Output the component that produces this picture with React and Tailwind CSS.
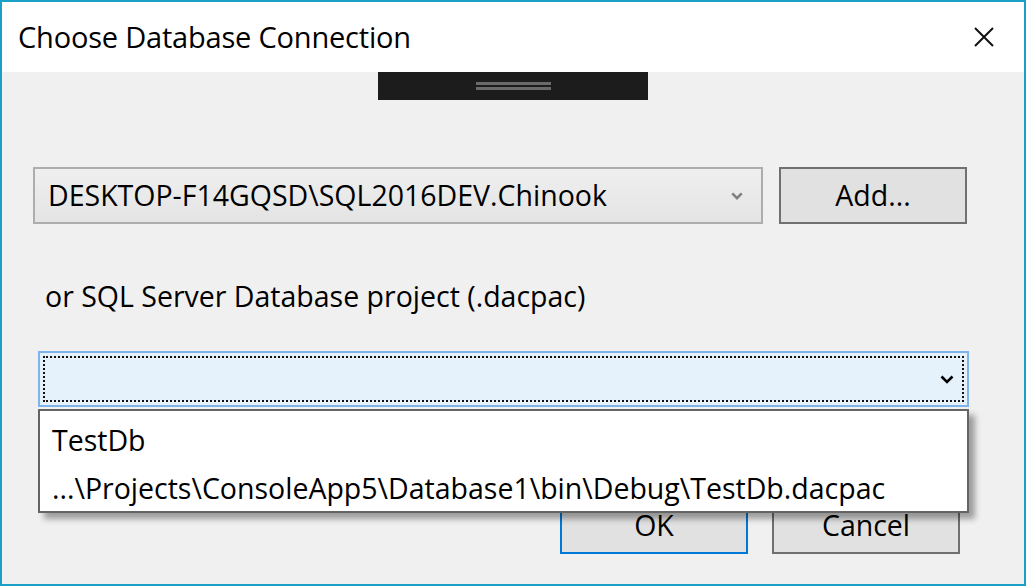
import React from "react";

const font = { fontFamily: '"Open Sans", "Noto Sans", sans-serif' };

const Chevron = ({ className, width = 2.6 }) => (
  <svg viewBox="0 0 14 9" className={className} fill="none" stroke="currentColor" strokeWidth={width}>
    <path d="M1.5 1.5 L7 7 L12.5 1.5" />
  </svg>
);

const Button = ({ label, focused }) => (
  <div
    className={
      "w-[188px] h-[57px] flex items-center justify-center bg-[#e1e1e1] border-2 text-[28.5px] text-black " +
      (focused ? "border-[#0078d7]" : "border-[#707070]")
    }
  >
    {label}
  </div>
);

export default function App() {
  return (
    <div
      className="w-[1026px] h-[586px] border-2 border-[#1aa0c5] bg-[#f0f0f0] flex flex-col overflow-hidden"
      style={font}
    >
      {/* title bar */}
      <div className="h-[70px] bg-white flex items-center justify-between pl-[16px] pr-[30px] shrink-0">
        <span className="text-[29px] text-black tracking-[-0.2px]">Choose Database Connection</span>
        <svg viewBox="0 0 20 20" className="w-[20px] h-[20px]" stroke="#111" strokeWidth="2">
          <path d="M1 1 L19 19 M19 1 L1 19" />
        </svg>
      </div>

      <div className="relative flex-1 flex flex-col">
        {/* drag handle */}
        <div className="mx-auto w-[270px] h-[28px] bg-[#1c1c1c] flex flex-col items-center justify-center gap-[2px]">
          <div className="w-[75px] h-[3px] bg-[#6a6a6a]" />
          <div className="w-[75px] h-[3px] bg-[#6a6a6a]" />
        </div>

        {/* server row */}
        <div className="flex gap-[16px] ml-[31px] mt-[67px]">
          <div className="w-[730px] h-[57px] border-2 border-[#adadad] bg-gradient-to-b from-[#efefef] to-[#e4e4e4] flex items-center justify-between pl-[13px] pr-[18px]">
            <span className="text-[28.5px] text-black">DESKTOP-F14GQSD\SQL2016DEV.Chinook</span>
            <Chevron className="w-[12px] h-[8px] text-[#808080]" width={3} />
          </div>
          <Button label="Add..." />
        </div>

        {/* label */}
        <div className="ml-[43px] mt-[52px] h-[40px] flex items-center text-[28.5px] leading-[40px] text-black">
          or SQL Server Database project (.dacpac)
        </div>

        {/* dacpac combo */}
        <div className="ml-[36px] mt-[35px] w-[931px] h-[56px] border-2 border-[#7eb4ea] bg-[#e5f1fb] p-[3px]">
          <div className="w-full h-full border-2 border-dotted border-[#111] flex items-center justify-end pr-[8px]">
            <Chevron className="w-[14px] h-[9px] text-black" />
          </div>
        </div>

        {/* buttons */}
        <div className="flex gap-[24px] ml-[558px] mt-[90px]">
          <Button label="OK" focused />
          <Button label="Cancel" />
        </div>

        {/* open dropdown list */}
        <div className="absolute left-[36px] top-[337px] w-[931px] h-[104px] bg-white border-2 border-[#646464] shadow-[6px_6px_6px_rgba(0,0,0,0.35)] pl-[12px] pt-[5px] text-[28.5px] text-black">
          <div className="h-[48px] flex items-center">TestDb</div>
          <div className="h-[48px] flex items-center">...\Projects\ConsoleApp5\Database1\bin\Debug\TestDb.dacpac</div>
        </div>
      </div>
    </div>
  );
}
